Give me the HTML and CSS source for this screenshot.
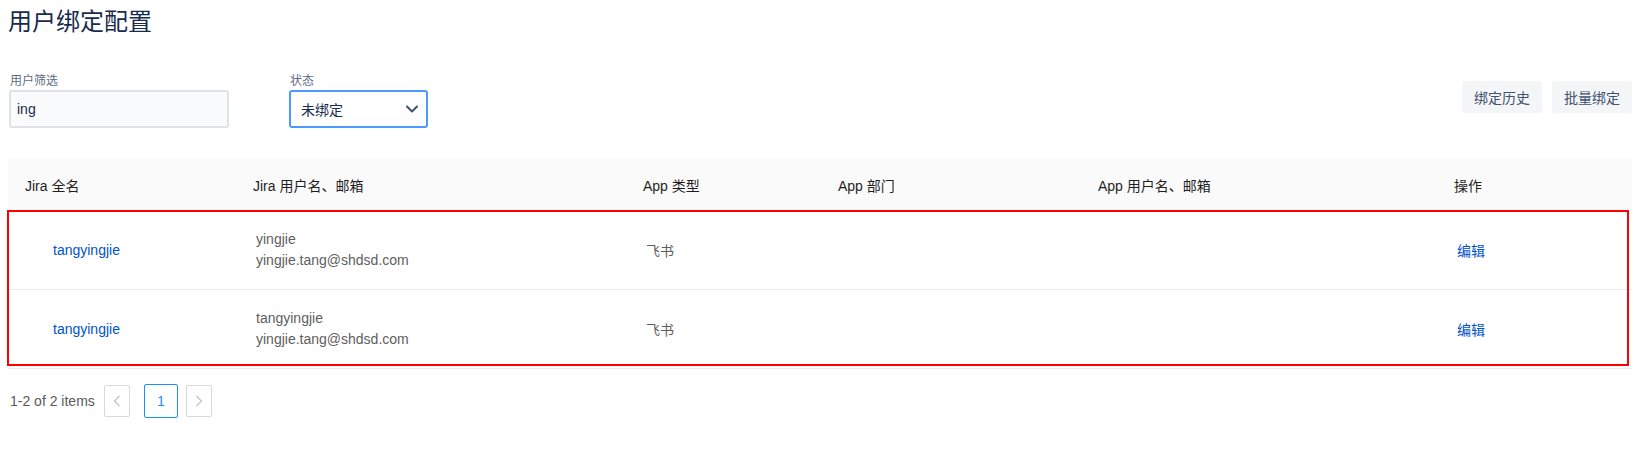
FILE: index.html
```html
<!DOCTYPE html>
<html lang="zh-CN">
<head>
<meta charset="utf-8">
<title>用户绑定配置</title>
<link rel="stylesheet" href="styles.css">
</head>
<body>
<div class="page">
  <h1 class="title">用户绑定配置</h1>

  <div class="toolbar">
    <div class="filters">
      <div class="field field-user">
        <label class="field-label">用户筛选</label>
        <div class="input">ing</div>
      </div>
      <div class="field field-status">
        <label class="field-label">状态</label>
        <div class="select">
          <span>未绑定</span>
          <svg class="chevron" width="12" height="8" viewBox="0 0 12 8"><path d="M1 1.5 L6 6.5 L11 1.5" fill="none" stroke="#42526e" stroke-width="2" stroke-linecap="round" stroke-linejoin="round"/></svg>
        </div>
      </div>
    </div>
    <div class="actions">
      <button class="btn">绑定历史</button>
      <button class="btn">批量绑定</button>
    </div>
  </div>

  <div class="table">
    <div class="row thead">
      <div class="th">Jira 全名</div>
      <div class="th">Jira 用户名、邮箱</div>
      <div class="th">App 类型</div>
      <div class="th">App 部门</div>
      <div class="th">App 用户名、邮箱</div>
      <div class="th">操作</div>
    </div>
    <div class="tbody">
      <div class="row trow">
        <div class="td td-name"><a class="link">tangyingjie</a></div>
        <div class="td td-multi"><span>yingjie</span><span>yingjie.tang@shdsd.com</span></div>
        <div class="td">飞书</div>
        <div class="td"></div>
        <div class="td"></div>
        <div class="td"><a class="link">编辑</a></div>
      </div>
      <div class="row trow">
        <div class="td td-name"><a class="link">tangyingjie</a></div>
        <div class="td td-multi"><span>tangyingjie</span><span>yingjie.tang@shdsd.com</span></div>
        <div class="td">飞书</div>
        <div class="td"></div>
        <div class="td"></div>
        <div class="td"><a class="link">编辑</a></div>
      </div>
      <div class="highlight"></div>
    </div>
  </div>

  <div class="pagination">
    <span class="total">1-2 of 2 items</span>
    <span class="pg pg-arrow pg-prev"><svg width="8" height="12" viewBox="0 0 8 12"><path d="M6.5 1 L1.5 6 L6.5 11" fill="none" stroke="#c1c1c1" stroke-width="1.2"/></svg></span>
    <span class="pg pg-active">1</span>
    <span class="pg pg-arrow"><svg width="8" height="12" viewBox="0 0 8 12"><path d="M1.5 1 L6.5 6 L1.5 11" fill="none" stroke="#c1c1c1" stroke-width="1.2"/></svg></span>
  </div>
</div>
</body>
</html>
```

FILE: styles.css
```css
* { box-sizing: border-box; }
html, body { margin: 0; padding: 0; background: #ffffff; }
body {
  font-family: "Liberation Sans", "Noto Sans CJK SC", sans-serif;
  font-size: 14px;
  color: #172b4d;
}
.page {
  padding: 0 19px 0 8px;
}
.title {
  margin: 8px 0 0 0;
  font-size: 24px;
  line-height: 28px;
  font-weight: 400;
  color: #172b4d;
}
.toolbar {
  margin-top: 37px;
  display: flex;
  justify-content: space-between;
  align-items: flex-start;
}
.filters {
  display: flex;
  gap: 60px;
  padding-left: 1px;
}
.field {
  display: flex;
  flex-direction: column;
}
.field-label {
  font-size: 12px;
  line-height: 16px;
  height: 17px;
  color: #5e6c84;
  padding-left: 1px;
}
.input {
  width: 220px;
  height: 38px;
  border: 2px solid #dfe1e6;
  border-radius: 3px;
  background: #fafbfc;
  padding: 0 6px;
  display: flex;
  align-items: center;
  font-size: 14px;
  color: #172b4d;
}
.select {
  width: 139px;
  height: 38px;
  border: 2px solid #4c9aff;
  border-radius: 3px;
  background: #ffffff;
  padding: 0 8px 0 10px;
  display: flex;
  align-items: center;
  justify-content: space-between;
  font-size: 14px;
  color: #172b4d;
}
.chevron { display: block; }
.actions {
  display: flex;
  gap: 10px;
  margin-top: 8px;
}
.btn {
  width: 80px;
  height: 32px;
  border: none;
  border-radius: 3px;
  background: #f4f5f7;
  color: #42526e;
  font-family: inherit;
  font-size: 14px;
  padding: 0;
}

.table {
  margin-top: 31px;
}
.row {
  display: grid;
  grid-template-columns: 228px 390px 195px 260px 356px 195px;
}
.thead {
  height: 52px;
  background: #fafafa;
  align-items: center;
}
.th {
  padding-left: 17px;
  font-size: 14px;
  color: #1f1f1f;
}
.tbody {
  position: relative;
}
.trow {
  height: 79px;
  border-bottom: 1px solid #ebecf0;
  align-items: center;
}
.td {
  padding-left: 20px;
  font-size: 14px;
  color: #5e5e5e;
}
.td-name {
  padding-left: 45px;
}
.td-multi {
  display: flex;
  flex-direction: column;
  line-height: 21px;
}
.link {
  color: #0052cc;
  text-decoration: none;
}
.highlight {
  position: absolute;
  top: -1px;
  left: -1px;
  right: 3px;
  bottom: 3px;
  border: 2px solid #ff0000;
  pointer-events: none;
}

.pagination {
  margin-top: 15px;
  display: flex;
  align-items: center;
  padding-left: 2px;
}
.total {
  font-size: 14px;
  color: #595959;
  margin-right: 9px;
}
.pg {
  display: flex;
  align-items: center;
  justify-content: center;
  border: 1px solid #d9d9d9;
  border-radius: 2px;
  background: #fff;
}
.pg-arrow {
  width: 26px;
  height: 32px;
}
.pg-prev { margin-right: 14px; }
.pg-active {
  width: 34px;
  height: 34px;
  border-color: #1890ff;
  color: #1890ff;
  font-size: 14px;
  margin-right: 8px;
}
```
